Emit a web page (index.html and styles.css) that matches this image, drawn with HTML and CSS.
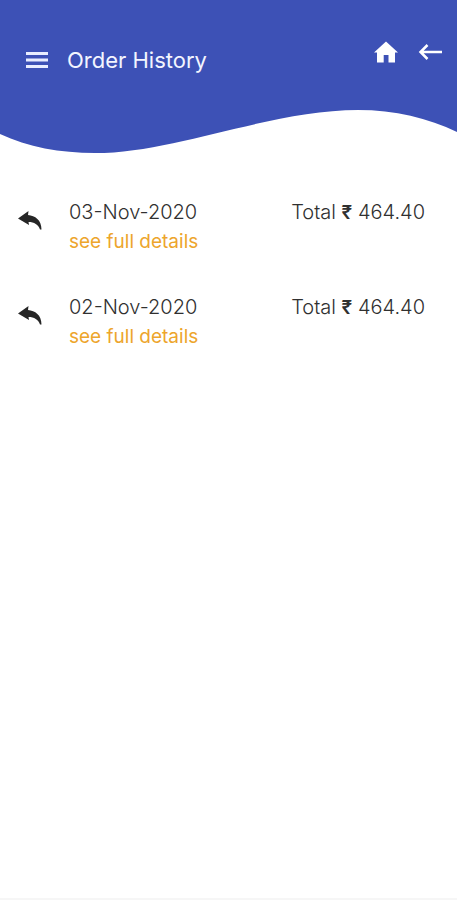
FILE: index.html
```
<!DOCTYPE html>
<html lang="en">
<head>
  <meta charset="UTF-8" />
  <meta name="viewport" content="width=device-width, initial-scale=1.0"/>
  <title>Order History</title>
  <link rel="stylesheet" href="styles.css">
</head>
<body>
  <header class="header">
    <div class="header-bar">
      <button class="icon-btn" type="button" aria-label="Menu">
        <svg width="24" height="18" viewBox="0 0 24 18"><path d="M1 2.5h22M1 9h22M1 15.500h22" stroke="#e9edff" stroke-width="3"/></svg>
      </button>
      <h1 class="title">Order History</h1>
      <nav class="nav">
        <a class="icon-btn" href="#" aria-label="Home">
          <svg width="24" height="22" viewBox="0 0 24 22"><path d="M12 0.500L24 11.500H21V21.500H14.500V14H9.700V21.500H3V11.500H0z" fill="#fff"/></svg>
        </a>
        <a class="icon-btn" href="#" aria-label="Back">
          <svg width="24" height="22" viewBox="0 0 24 22"><path d="M24 11H3.500M9.500 4L2.500 11L9.500 18" fill="none" stroke="#fff" stroke-width="2.500"/></svg>
        </a>
      </nav>
    </div>
  </header>
  <svg class="wave" viewBox="0 0 457 44" preserveAspectRatio="none">
    <path d="M0 0H358C395 0 428 8 457 22V0H0V24C28 37 60 43 95 43C175 43 270 0 358 0z" fill="#3d51b6"/>
  </svg>

  <main class="orders">
    <!-- Order rows -->
    <div class="order">
      <svg class="reply" width="26" height="22" viewBox="0 0 26 22"><path d="M1 8.500L11.500 1L11 5C18 5.500 24.500 10 24.500 19.500L23 19.500C21.500 14.500 17 12 11.500 12L12 15z" fill="#262626"/></svg>
      <div class="order-info">
        <div class="date">03-Nov-2020</div>
        <a class="details" href="#">see full details</a>
      </div>
      <div class="total">Total <span class="rupee">₹</span> 464.40</div>
    </div>
    <div class="order">
      <svg class="reply" width="26" height="22" viewBox="0 0 26 22"><path d="M1 8.500L11.500 1L11 5C18 5.500 24.500 10 24.500 19.500L23 19.500C21.500 14.500 17 12 11.500 12L12 15z" fill="#262626"/></svg>
      <div class="order-info">
        <div class="date">02-Nov-2020</div>
        <a class="details" href="#">see full details</a>
      </div>
      <div class="total">Total <span class="rupee">₹</span> 464.40</div>
    </div>
  </main>
</body>
</html>
```
FILE: styles.css
```
body {
  font-family: Inter, "Open Sans", sans-serif;
  background: #fff;
  color: #303030;
  margin: 0;
  min-height: 100vh;
  box-sizing: border-box;
  border-bottom: 2px solid #f6f6f6;
}
.header {
  background: #3d51b6;
  padding: 41px 15px 37px 25px;
}
.header-bar {
  display: flex;
  align-items: flex-end;
  height: 32px;
}
.title {
  flex: 1;
  margin: 0 0 0 18px;
  font-size: 22px;
  font-weight: 400;
  line-height: 26px;
  color: #f3f5ff;
}
.nav {
  display: flex;
  align-self: flex-start;
  gap: 20px;
}
.icon-btn {
  display: block;
  padding: 0;
  border: none;
  background: none;
  cursor: pointer;
}
.header-bar > .icon-btn {
  padding-bottom: 4px;
}
.icon-btn svg {
  display: block;
}
.wave {
  display: block;
  width: 100%;
  height: 44px;
}
.orders {
  padding: 44px 32px 0 17px;
}
.order {
  display: flex;
  align-items: flex-start;
  margin-bottom: 37px;
  font-size: 20px;
  font-weight: 300;
  line-height: 29px;
}
.reply {
  margin: 12px 26px 0 0;
}
.order-info {
  flex: 1;
}
.details {
  display: block;
  color: #eda52c;
  text-decoration: none;
  font-size: 19px;
  font-weight: 400;
}
.rupee {
  font-size: 19px;
  font-weight: 600;
}
```
